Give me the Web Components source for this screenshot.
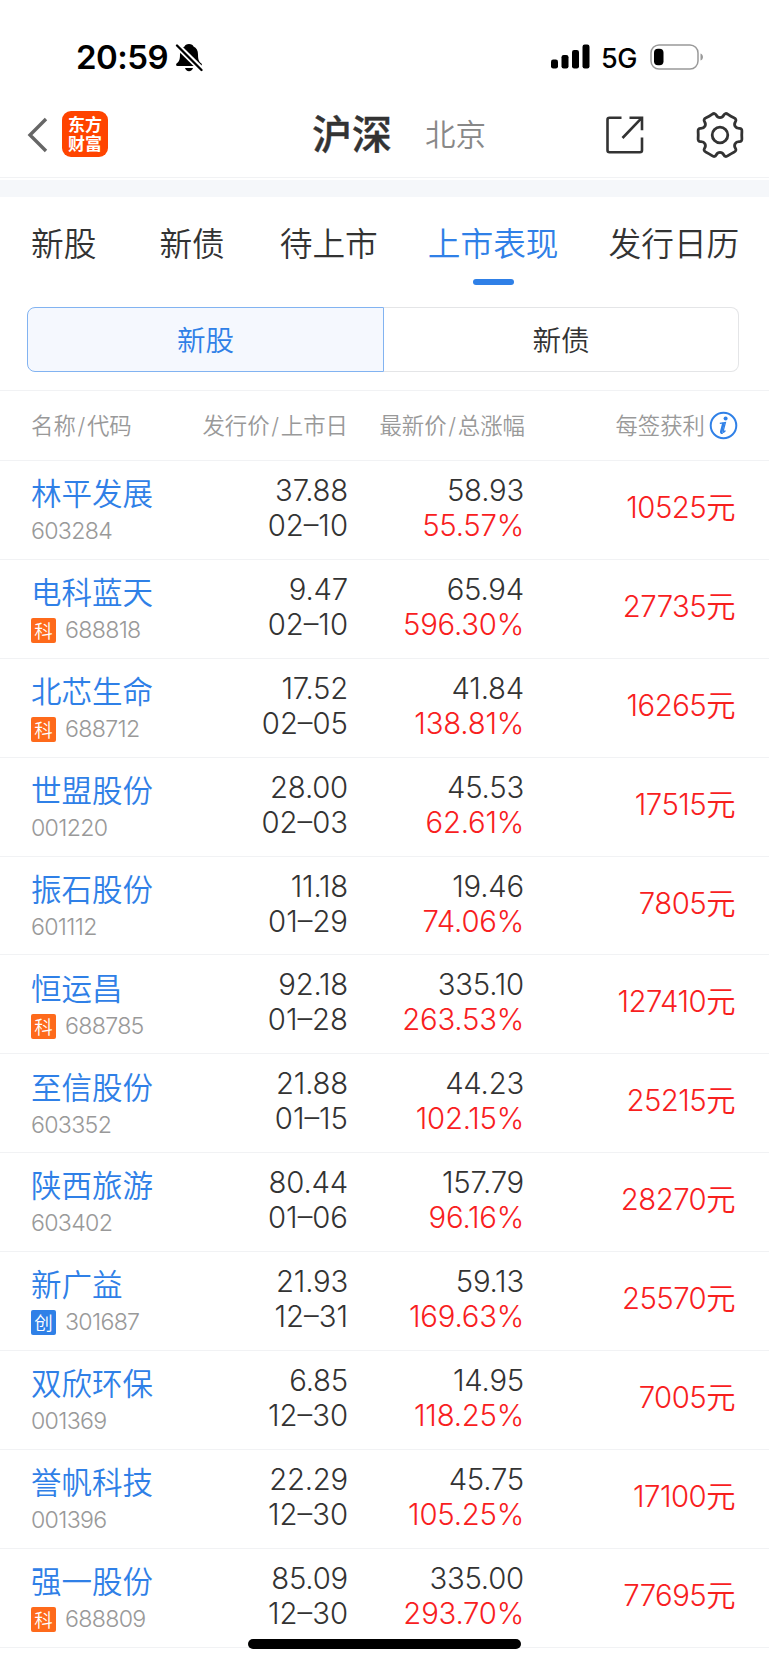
<!DOCTYPE html>
<html lang="zh-CN">
<head>
<meta charset="utf-8">
<title>上市表现</title>
<style>
  body {
    margin: 0;
    background: #fff;
    color: #333;
    font-family: Inter, "Noto Sans CJK SC", sans-serif;
    font-weight: 350;
    --blue: #2f80e7;
    --red: #f8201e;
    --line: #f1f2f4;
  }
</style>
</head>
<body>
<ipo-app></ipo-app>

<script>
const STOCKS = [
  { name: '林平发展', code: '603284', price: '37.88', date: '02–10', last: '58.93', rate: '55.57%', profit: '10525' },
  { name: '电科蓝天', code: '688818', board: '科', price: '9.47', date: '02–10', last: '65.94', rate: '596.30%', profit: '27735' },
  { name: '北芯生命', code: '688712', board: '科', price: '17.52', date: '02–05', last: '41.84', rate: '138.81%', profit: '16265' },
  { name: '世盟股份', code: '001220', price: '28.00', date: '02–03', last: '45.53', rate: '62.61%', profit: '17515' },
  { name: '振石股份', code: '601112', price: '11.18', date: '01–29', last: '19.46', rate: '74.06%', profit: '7805' },
  { name: '恒运昌', code: '688785', board: '科', price: '92.18', date: '01–28', last: '335.10', rate: '263.53%', profit: '127410' },
  { name: '至信股份', code: '603352', price: '21.88', date: '01–15', last: '44.23', rate: '102.15%', profit: '25215' },
  { name: '陕西旅游', code: '603402', price: '80.44', date: '01–06', last: '157.79', rate: '96.16%', profit: '28270' },
  { name: '新广益', code: '301687', board: '创', price: '21.93', date: '12–31', last: '59.13', rate: '169.63%', profit: '25570' },
  { name: '双欣环保', code: '001369', price: '6.85', date: '12–30', last: '14.95', rate: '118.25%', profit: '7005' },
  { name: '誉帆科技', code: '001396', price: '22.29', date: '12–30', last: '45.75', rate: '105.25%', profit: '17100' },
  { name: '强一股份', code: '688809', board: '科', price: '85.09', date: '12–30', last: '335.00', rate: '293.70%', profit: '77695' },
]

// Six-toothed outline, smoothed through the midpoints of its corners.
function gearPath(cx, cy) {
  const pts = []
  const at = (deg, r) => pts.push([
    cx + r * Math.cos(deg * Math.PI / 180),
    cy + r * Math.sin(deg * Math.PI / 180),
  ])
  for (let a = 0; a < 360; a += 60) {
    at(a - 17, 23.2)
    at(a, 21.6)
    at(a + 17, 23.2)
    at(a + 22, 17.6)
    at(a + 38, 17.6)
  }
  const mid = (p, q) => `${((p[0] + q[0]) / 2).toFixed(2)} ${((p[1] + q[1]) / 2).toFixed(2)}`
  let d = `M${mid(pts[pts.length - 1], pts[0])}`
  pts.forEach((p, i) => {
    d += `Q${p[0].toFixed(2)} ${p[1].toFixed(2)} ${mid(p, pts[(i + 1) % pts.length])}`
  })
  return d + 'Z'
}

class BaseElement extends HTMLElement {
  constructor() {
    super()
    this.attachShadow({ mode: 'open' })
  }

  connectedCallback() {
    this.shadowRoot.innerHTML = this.template()
  }
}

class StatusBar extends BaseElement {
  template() {
    return `
      <style>
        :host {
          display: flex;
          align-items: center;
          box-sizing: border-box;
          height: 94px;
          padding: 20px 64px 0 76px;
          color: #000;
        }
        .time { font-size: 33px; font-weight: 600; line-height: 40px; width: 92px; letter-spacing: -0.5px; white-space: nowrap; }
        .bell { margin: 2px 0 0 7px; }
        .right { display: flex; align-items: center; margin: 0 0 0 auto; }
        .net { font-size: 27px; font-weight: 500; line-height: 36px; width: 36px; margin: 3px 13px 0 11px; letter-spacing: -0.5px; }
        svg { display: block; }
      </style>
      <span class="time">20:59</span>
      <svg class="bell" width="28" height="30" viewBox="0 0 28 30">
        <path d="M14 1C11.500 1 10 2.200 9.500 3.500C6.500 5 5 7.500 5 11.500C5 17 4 18.500 1.800 20.300C.8 21.200 .8 23 2.500 23H25.500C27.200 23 27.200 21.200 26.200 20.300C24 18.500 23 17 23 11.500C23 7.500 21.500 5 18.500 3.500C18 2.200 16.500 1 14 1Z"/>
        <path d="M10 25h8c-.5 2-2 3.200-4 3.200S10.500 27 10 25z"/>
        <path d="M1 1.500l26 25.500" stroke="#fff" stroke-width="6"/>
        <path d="M2 2.500l24.500 24.500" stroke="#000" stroke-width="2.300" stroke-linecap="round"/>
      </svg>
      <div class="right">
        <svg width="39" height="26" viewBox="0 0 39 26">
          <rect x="0" y="15.500" width="7" height="9" rx="2.200"/>
          <rect x="10.500" y="11" width="7" height="13.500" rx="2.200"/>
          <rect x="21" y="6" width="7" height="18.500" rx="2.200"/>
          <rect x="31.500" y="0.500" width="7" height="24" rx="2.200"/>
        </svg>
        <span class="net">5G</span>
        <svg width="55" height="26" viewBox="0 0 55 26">
          <rect x="1" y="1" width="47" height="24" rx="8" fill="none" stroke="#999" stroke-width="1.500"/>
          <rect x="4" y="4.800" width="9.500" height="16.500" rx="4"/>
          <path d="M50.500 9.500c3.300 1 3.300 6 0 7z" fill="#999"/>
        </svg>
      </div>
    `
  }
}

class NavBar extends BaseElement {
  template() {
    return `
      <style>
        :host {
          display: flex;
          align-items: center;
          box-sizing: border-box;
          height: 84px;
          padding: 0 24px 2px 27px;
          border-bottom: 1px solid var(--line);
        }
        svg { display: block; flex: none; }
        .logo {
          display: grid;
          place-content: center;
          box-sizing: border-box;
          width: 46px;
          height: 46px;
          margin: 0 0 1px 14px;
          padding-top: 2px;
          border-radius: 9px;
          background: #ff4400;
          color: #fff;
          font: 700 17px/19.500px "Liberation Sans", "Noto Sans CJK SC", sans-serif;
        }
        .title { margin-left: 204px; font-size: 40px; font-weight: 500; line-height: 48px; -webkit-text-stroke: 0.4px #333; }
        .other { margin-left: 33px; font-size: 30.500px; line-height: 40px; color: #888; }
        .share { margin: 0 -1px 0 auto; }
        .gear { margin-left: 52px; }
      </style>
      <svg width="21" height="36" viewBox="0 0 21 36" fill="none" stroke="#666" stroke-width="3.400">
        <path d="M19 2L3 18l16 16"/>
      </svg>
      <div class="logo"><span>东方</span><span>财富</span></div>
      <span class="title">沪深</span>
      <span class="other">北京</span>
      <svg class="share" width="38" height="38" viewBox="0 0 38 38" fill="none" stroke="#333" stroke-width="2.600">
        <path d="M15.500 1.700H3.500Q1.500 1.700 1.500 3.700v30.500q0 2 2 2h30.500q2 0 2-2V21.500M23.500 1.700h12.500v12.500M36 1.700L16.500 22"/>
      </svg>
      <svg class="gear" width="50" height="50" viewBox="0 0 50 50" fill="none" stroke="#333" stroke-width="2.800">
        <path d="${gearPath(25, 25)}"/>
        <circle cx="25" cy="25" r="7.800"/>
      </svg>
    `
  }
}

class TabBar extends BaseElement {
  template() {
    return `
      <style>
        :host {
          display: flex;
          gap: 50px;
          box-sizing: border-box;
          height: 127px;
          padding: 25px 0 0 31px;
          border-top: 17px solid #f5f7fa;
          margin-top: 2px;
        }
        ::slotted(:nth-child(1)) { margin-right: 13px; }
        ::slotted(:nth-child(2)) { margin-right: 5px; }
      </style>
      <slot></slot>
    `
  }
}

class TabItem extends BaseElement {
  template() {
    return `
      <style>
        :host {
          display: flex;
          flex-direction: column;
          align-items: center;
          font-size: 32.700px;
          line-height: 44px;
          white-space: nowrap;
        }
        :host([active]) { color: var(--blue); }
        :host([active])::after {
          content: "";
          width: 41px;
          height: 6px;
          margin-top: 12.500px;
          border-radius: 3px;
          background: var(--blue);
        }
      </style>
      <slot></slot>
    `
  }
}

class SegmentControl extends BaseElement {
  template() {
    return `
      <style>
        :host {
          display: grid;
          grid-template-columns: 357px 1fr;
          height: 65px;
          margin: 0 30px 18px 27px;
          font-size: 28.600px;
          text-align: center;
        }
        .on, .off {
          box-sizing: border-box;
          height: 65px;
          line-height: 65px;
        }
        .on {
          border: 1px solid #82b3f1;
          border-radius: 8px 0 0 8px;
          background: #f5f8fe;
          color: var(--blue);
        }
        .off {
          border: 1px solid #e4e5e7;
          border-left: 0;
          border-radius: 0 8px 8px 0;
        }
      </style>
      <div class="on"><slot name="on"></slot></div>
      <div class="off"><slot name="off"></slot></div>
    `
  }
}

class TableHead extends BaseElement {
  template() {
    return `
      <style>
        :host {
          display: grid;
          grid-template-columns: 150px 167px 177px 1fr;
          align-items: center;
          box-sizing: border-box;
          height: 71px;
          padding: 0 31px 0 31px;
          border-top: 1px solid var(--line);
          border-bottom: 1px solid var(--line);
          color: #999;
          font-size: 22.400px;
          line-height: 32px;
          white-space: nowrap;
          text-align: right;
        }
        .left { text-align: left; }
        i { font-style: normal; padding: 0 1.700px; }
        .profit { display: flex; justify-content: flex-end; align-items: center; gap: 4px; }
        svg { display: block; }
      </style>
      <span class="left">名称<i>/</i>代码</span>
      <span>发行价<i>/</i>上市日</span>
      <span>最新价<i>/</i>总涨幅</span>
      <span class="profit">每签获利
        <svg width="29" height="29" viewBox="0 0 29 29">
          <circle cx="14.500" cy="14.500" r="12.800" fill="none" stroke="#2f80e7" stroke-width="2"/>
          <circle cx="16.600" cy="7.600" r="2" fill="#2f80e7"/>
          <path d="M10.800 12.400l5.600-.9-2.300 8.800q-.3 1.300.6.900.8-.5 1.700-1.700" fill="none" stroke="#2f80e7" stroke-width="1.300"/>
          <path d="M14.500 12l-2.200 8.500q-.3 1.600 1.300 1.200" fill="none" stroke="#2f80e7" stroke-width="2.600"/>
        </svg>
      </span>
    `
  }
}

class StockRow extends BaseElement {
  set stock(value) {
    this.data = value
  }

  template() {
    const s = this.data
    const badge = s.board
      ? `<span class="badge ${s.board === '创' ? 'blue' : ''}">${s.board}</span>`
      : ''
    return `
      <style>
        :host {
          display: grid;
          grid-template-columns: 150px 167px 176px 1fr;
          box-sizing: border-box;
          height: 98.900px;
          padding: 0 34px 0 31px;
          border-bottom: 1.500px solid var(--line);
          font-size: 29.300px;
          line-height: 35px;
          text-align: right;
          white-space: nowrap;
        }
        .name { padding-top: 13.200px; text-align: left; }
        .title { font-size: 30.500px; line-height: 39px; color: var(--blue); }
        .code {
          display: flex;
          align-items: center;
          gap: 9px;
          height: 37px;
          font-size: 23.200px;
          letter-spacing: -0.7px;
          color: #999;
        }
        .badge {
          width: 25px;
          height: 25px;
          border-radius: 2px;
          background: #fe6a1b;
          color: #fff;
          font-size: 18.500px;
          line-height: 26px;
          letter-spacing: 0;
          text-align: center;
        }
        .badge.blue { background: var(--blue); }
        .num { padding-top: 12px; }
        .num div { height: 35px; letter-spacing: -0.200px; }
        .num .date { letter-spacing: 0; }
        .red, .profit { color: var(--red); }
        .profit { padding-top: 29px; letter-spacing: -0.500px; }
      </style>
      <div class="name">
        <div class="title">${s.name}</div>
        <div class="code">${badge}<span>${s.code}</span></div>
      </div>
      <div class="num"><div>${s.price}</div><div class="date">${s.date}</div></div>
      <div class="num"><div>${s.last}</div><div class="red">${s.rate}</div></div>
      <div class="profit">${s.profit}元</div>
    `
  }
}

class StockList extends BaseElement {
  template() {
    return '<style>:host { display: block; }</style>'
  }

  connectedCallback() {
    super.connectedCallback()
    STOCKS.forEach((stock) => {
      const row = document.createElement('stock-row')
      row.stock = stock
      this.shadowRoot.append(row)
    })
  }
}

class IpoApp extends BaseElement {
  template() {
    return `
      <style>
        :host {
          display: block;
          position: relative;
          height: 1665px;
          overflow: hidden;
        }
        .home {
          position: absolute;
          left: 248px;
          bottom: 16px;
          width: 273px;
          height: 10px;
          border-radius: 5px;
          background: #000;
        }
      </style>
      <status-bar></status-bar>
      <nav-bar></nav-bar>
      <tab-bar>
        <tab-item>新股</tab-item>
        <tab-item>新债</tab-item>
        <tab-item>待上市</tab-item>
        <tab-item active>上市表现</tab-item>
        <tab-item>发行日历</tab-item>
      </tab-bar>
      <segment-control>
        <span slot="on">新股</span>
        <span slot="off">新债</span>
      </segment-control>
      <table-head></table-head>
      <stock-list></stock-list>
      <div class="home"></div>
    `
  }
}

customElements.define('status-bar', StatusBar)
customElements.define('nav-bar', NavBar)
customElements.define('tab-bar', TabBar)
customElements.define('tab-item', TabItem)
customElements.define('segment-control', SegmentControl)
customElements.define('table-head', TableHead)
customElements.define('stock-row', StockRow)
customElements.define('stock-list', StockList)
customElements.define('ipo-app', IpoApp)
</script>
</body>
</html>
